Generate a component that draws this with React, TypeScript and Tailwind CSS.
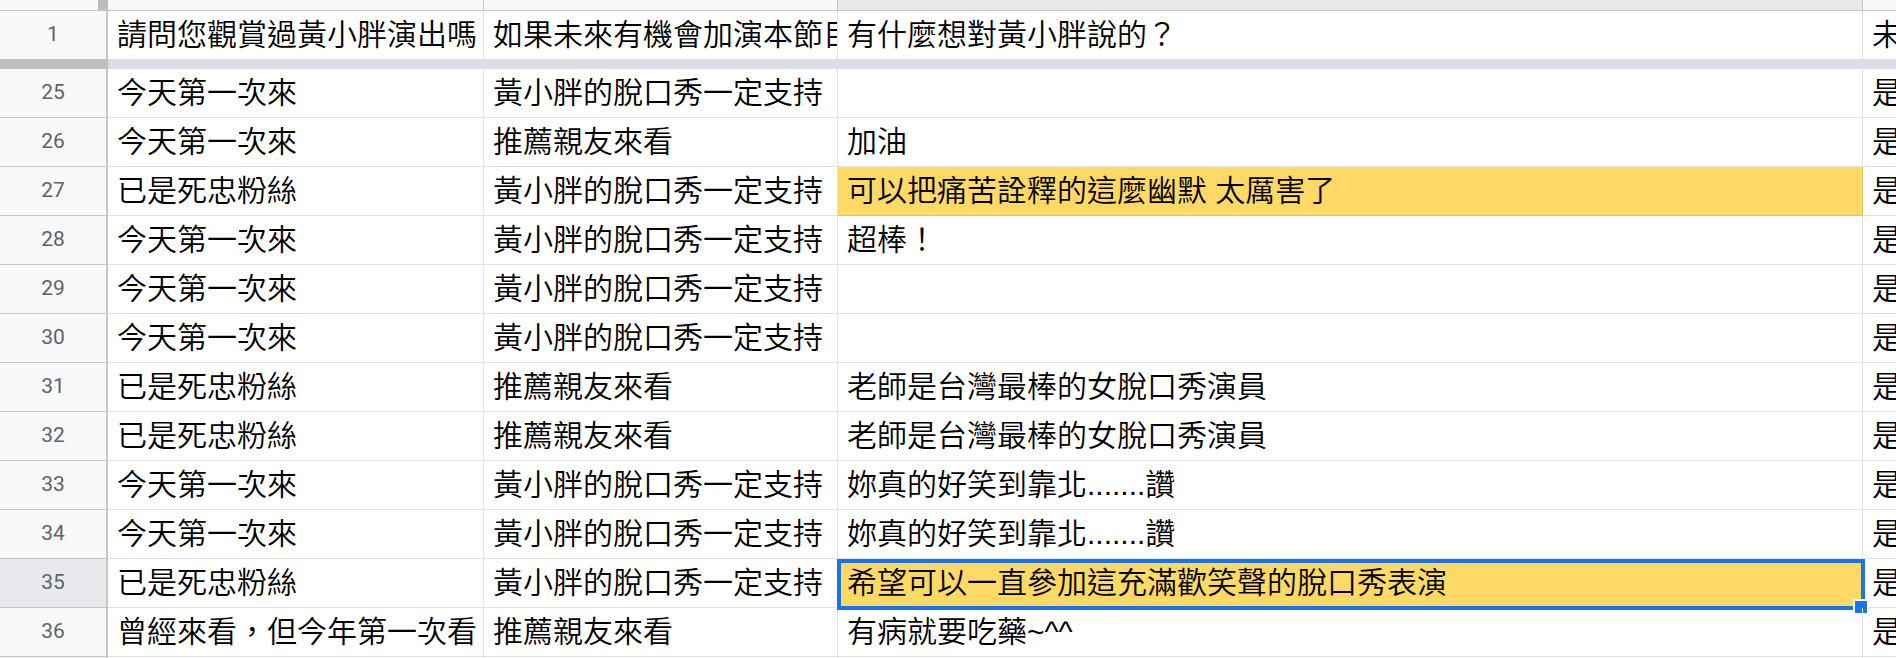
import React from "react";

type Row = {
  n: number;
  a: string;
  b: string;
  c: string;
  d: string;
  fill?: boolean;
  selected?: boolean;
};

const rows: Row[] = [
  { n: 25, a: "今天第一次來", b: "黃小胖的脫口秀一定支持", c: "", d: "是" },
  { n: 26, a: "今天第一次來", b: "推薦親友來看", c: "加油", d: "是" },
  { n: 27, a: "已是死忠粉絲", b: "黃小胖的脫口秀一定支持", c: "可以把痛苦詮釋的這麼幽默 太厲害了", d: "是", fill: true },
  { n: 28, a: "今天第一次來", b: "黃小胖的脫口秀一定支持", c: "超棒！", d: "是" },
  { n: 29, a: "今天第一次來", b: "黃小胖的脫口秀一定支持", c: "", d: "是" },
  { n: 30, a: "今天第一次來", b: "黃小胖的脫口秀一定支持", c: "", d: "是" },
  { n: 31, a: "已是死忠粉絲", b: "推薦親友來看", c: "老師是台灣最棒的女脫口秀演員", d: "是" },
  { n: 32, a: "已是死忠粉絲", b: "推薦親友來看", c: "老師是台灣最棒的女脫口秀演員", d: "是" },
  { n: 33, a: "今天第一次來", b: "黃小胖的脫口秀一定支持", c: "妳真的好笑到靠北.......讚", d: "是" },
  { n: 34, a: "今天第一次來", b: "黃小胖的脫口秀一定支持", c: "妳真的好笑到靠北.......讚", d: "是" },
  { n: 35, a: "已是死忠粉絲", b: "黃小胖的脫口秀一定支持", c: "希望可以一直參加這充滿歡笑聲的脫口秀表演", d: "是", fill: true, selected: true },
  { n: 36, a: "曾經來看，但今年第一次看", b: "推薦親友來看", c: "有病就要吃藥~^^", d: "是" },
];

const cell = "flex items-center border-r border-b border-[#e2e2e2] text-[30px] leading-[40px] text-black";

function Text({ children }: { children?: React.ReactNode }) {
  return <span className="block w-full overflow-hidden whitespace-nowrap px-[9px]">{children}</span>;
}

function RowHeader({ n, active }: { n: number; active?: boolean }) {
  return (
    <div
      className={`flex items-center justify-center border-r-2 border-b border-r-[#c4c7c5] border-b-[#c4c7c5] font-['Roboto',sans-serif] text-[21px] text-[#5f6368] ${
        active ? "bg-[#e8eaed]" : "bg-[#f8f9fa]"
      }`}
    >
      {n}
    </div>
  );
}

export default function App() {
  return (
    <div className="h-[658px] w-[1896px] overflow-hidden bg-white font-['Liberation_Sans','Noto_Sans_CJK_TC_DemiLight','Noto_Sans_CJK_TC_Light','Noto_Sans_CJK_TC',sans-serif]">
      <div className="grid grid-cols-[108px_376px_354px_1025px_1fr]">
        {/* column header strip */}
        <div className="flex h-[11px] border-b border-[#c4c7c5] bg-[#f8f9fa]">
          <div className="flex-1" />
          <div className="w-[10px] bg-[#bdbdbd]" />
        </div>
        <div className="h-[11px] border-r border-b border-[#c4c7c5] bg-[#f8f9fa]" />
        <div className="h-[11px] border-r border-b border-[#c4c7c5] bg-[#f8f9fa]" />
        <div className="h-[11px] border-r border-b border-[#c4c7c5] bg-[#e8eaed]" />
        <div className="h-[11px] border-b border-[#c4c7c5] bg-[#f8f9fa]" />

        {/* frozen header row */}
        <div className="flex h-[48px] items-center justify-center border-r-2 border-[#c4c7c5] bg-[#f8f9fa] font-['Roboto',sans-serif] text-[21px] text-[#5f6368]">
          1
        </div>
        <div className={`${cell} h-[48px] border-b-0`}>
          <Text>請問您觀賞過黃小胖演出嗎</Text>
        </div>
        <div className={`${cell} h-[48px] border-b-0`}>
          <Text>如果未來有機會加演本節目，您會再來嗎？</Text>
        </div>
        <div className={`${cell} h-[48px] border-b-0`}>
          <Text>有什麼想對黃小胖說的？</Text>
        </div>
        <div className={`${cell} h-[48px] border-b-0 border-r-0`}>
          <Text>未來</Text>
        </div>

        {/* freeze bar */}
        <div className="h-[10px] bg-[#bfbfbf]" />
        <div className="col-span-4 h-[10px] bg-[#dadfe7]" />

        {rows.map((r) => (
          <React.Fragment key={r.n}>
            <RowHeader n={r.n} active={r.selected} />
            <div className={`${cell} h-[49px]`}>
              <Text>{r.a}</Text>
            </div>
            <div className={`${cell} h-[49px]`}>
              <Text>{r.b}</Text>
            </div>
            <div className={`${cell} relative h-[49px] ${r.fill ? "bg-[#ffd966] border-[#e3c463]" : ""}`}>
              <Text>{r.c}</Text>
              {r.selected ? (
                <>
                  <div className="absolute top-0 -left-px -right-[3px] -bottom-[3px] border-4 border-[#1a73e8]" />
                  <div className="absolute -right-[7px] -bottom-[8px] h-[16px] w-[16px] border-2 border-white bg-[#1a73e8]" />
                </>
              ) : null}
            </div>
            <div className={`${cell} h-[49px] border-r-0`}>
              <Text>{r.d}</Text>
            </div>
          </React.Fragment>
        ))}

        <RowHeader n={37} />
        <div className={`${cell} h-[49px]`} />
        <div className={`${cell} h-[49px]`} />
        <div className={`${cell} h-[49px]`} />
        <div className={`${cell} h-[49px] border-r-0`} />
      </div>
    </div>
  );
}
